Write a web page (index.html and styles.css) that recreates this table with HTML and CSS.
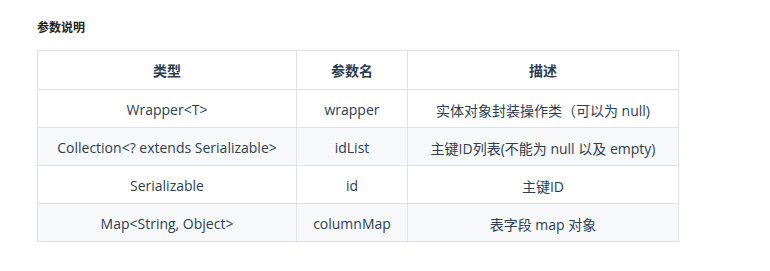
FILE: index.html
```html
<!DOCTYPE html>
<html lang="zh">
<head>
<meta charset="utf-8">
<link rel="stylesheet" href="styles.css">
</head>
<body>
<div class="page">
  <h4 class="title">参数说明</h4>
  <table class="params">
    <colgroup>
      <col class="c1"><col class="c2"><col class="c3">
    </colgroup>
    <thead>
      <tr><th>类型</th><th>参数名</th><th>描述</th></tr>
    </thead>
    <tbody>
      <tr><td>Wrapper&lt;T&gt;</td><td>wrapper</td><td>实体对象封装操作类（可以为 null)</td></tr>
      <tr><td>Collection&lt;? extends Serializable&gt;</td><td>idList</td><td>主键ID列表(不能为 null 以及 empty)</td></tr>
      <tr><td>Serializable</td><td>id</td><td>主键ID</td></tr>
      <tr><td>Map&lt;String, Object&gt;</td><td>columnMap</td><td>表字段 map 对象</td></tr>
    </tbody>
  </table>
</div>
</body>
</html>
```
FILE: styles.css
```css
html, body {
  margin: 0;
  padding: 0;
  background: #fff;
}
.page {
  padding: 20px 0 0 37px;
  font-family: "Open Sans", "Noto Sans CJK SC", sans-serif;
  color: #2c3e50;
}
.title {
  margin: 0 0 17px 0;
  font-size: 12px;
  line-height: 13px;
  font-weight: bold;
  color: #222;
  font-family: "Noto Sans CJK SC", sans-serif;
}
.params {
  border-collapse: collapse;
  width: 641px;
  font-size: 14px;
  table-layout: fixed;
}
.c1 { width: 259px; }
.c2 { width: 111px; }
.c3 { width: 271px; }
.params th, .params td {
  border: 1px solid #dfe2e5;
  height: 38px;
  padding: 2px 6px 0;
  text-align: center;
  box-sizing: border-box;
  white-space: nowrap;
}
.params th {
  font-weight: bold;
  height: 39px;
  padding-top: 0;
}
.params tbody tr:nth-child(2n+1) { background: #fff; }
.params tbody tr:nth-child(2n) { background: #f6f8fa; }
```
